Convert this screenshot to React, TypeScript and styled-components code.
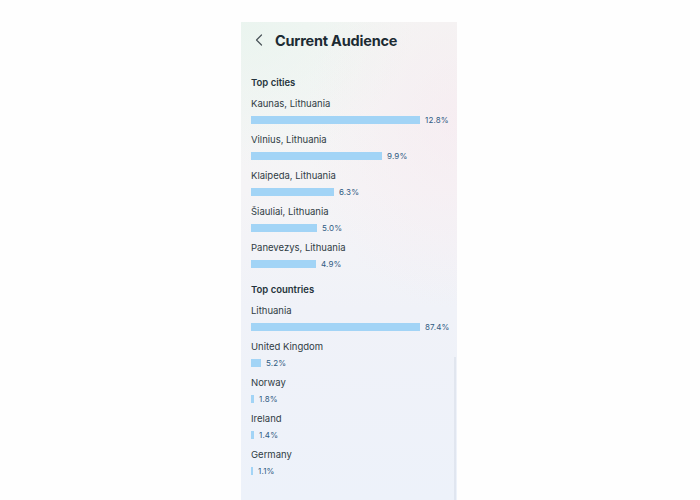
import React from "react";
import styled, { createGlobalStyle } from "styled-components";

const GlobalStyle = createGlobalStyle`
  html, body { margin: 0; padding: 0; background: #ffffff; }
  body { font-family: Inter, "Open Sans", "Liberation Sans", sans-serif; }
  * { box-sizing: border-box; }
`;

const Page = styled.div`
  width: 700px;
  height: 500px;
  display: flex;
  justify-content: flex-start;
  padding-left: 241px;
  background: #fefefe;
  overflow: hidden;
`;

const Phone = styled.div`
  position: relative;
  width: 216px;
  margin-top: 22px;
  height: 478px;
  display: flex;
  flex-direction: column;
  background:
    radial-gradient(ellipse 70% 40% at 100% 20%, rgba(248, 230, 238, 0.5), rgba(248, 230, 238, 0) 100%),
    radial-gradient(ellipse 80% 30% at 0% 0%, rgba(232, 244, 238, 0.8), rgba(232, 244, 238, 0) 100%),
    linear-gradient(180deg, #f4f6f4 0%, #f5f4f6 35%, #f0f2f8 60%, #edf2fa 100%);

  &::after {
    content: "";
    position: absolute;
    right: 1px;
    top: 335px;
    bottom: 0;
    width: 2px;
    background: rgba(200, 208, 222, 0.35);
  }
`;

const Header = styled.div`
  height: 36px;
  display: flex;
  align-items: center;
  padding-left: 14px;
  gap: 12px;
`;

const BackIcon = styled.svg`
  width: 8px;
  height: 12px;
  flex: none;
`;

const Title = styled.h1`
  margin: 0;
  font-size: 14.5px;
  font-weight: 700;
  color: #1c2b33;
  letter-spacing: -0.2px;
`;

const Content = styled.div`
  padding-left: 10px;
  display: flex;
  flex-direction: column;
  margin-top: 18px;
`;

const SectionTitle = styled.h2<{ $gap?: number }>`
  margin: ${(p) => p.$gap ?? 0}px 0 7px 0;
  font-size: 9.5px;
  line-height: 14px;
  font-weight: 600;
  color: #26343c;
`;

const Row = styled.div`
  display: flex;
  flex-direction: column;
  gap: 4px;
  margin-bottom: 8px;
`;

const Label = styled.div`
  font-size: 9.5px;
  line-height: 14px;
  color: #2f3c44;
`;

const BarLine = styled.div`
  height: 10px;
  display: flex;
  align-items: center;
  gap: 5px;
`;

const Bar = styled.div`
  height: 8px;
  background: #a2d4f6;
  flex: none;
`;

const Pct = styled.span`
  font-size: 8px;
  line-height: 10px;
  color: #2f5a82;
  letter-spacing: 0.15px;
`;

type Item = { name: string; pct: number };

const cities: Item[] = [
  { name: "Kaunas, Lithuania", pct: 12.8 },
  { name: "Vilnius, Lithuania", pct: 9.9 },
  { name: "Klaipeda, Lithuania", pct: 6.3 },
  { name: "Šiauliai, Lithuania", pct: 5.0 },
  { name: "Panevezys, Lithuania", pct: 4.9 },
];

const countries: Item[] = [
  { name: "Lithuania", pct: 87.4 },
  { name: "United Kingdom", pct: 5.2 },
  { name: "Norway", pct: 1.8 },
  { name: "Ireland", pct: 1.4 },
  { name: "Germany", pct: 1.1 },
];

const MAX_BAR = 169;

const List: React.FC<{ items: Item[] }> = ({ items }) => {
  const max = Math.max(...items.map((i) => i.pct));
  return (
    <>
      {items.map((it) => (
        <Row key={it.name}>
          <Label>{it.name}</Label>
          <BarLine>
            <Bar style={{ width: `${Math.max(2, Math.round((it.pct / max) * MAX_BAR))}px` }} />
            <Pct>{it.pct.toFixed(1)}%</Pct>
          </BarLine>
        </Row>
      ))}
    </>
  );
};

export default function App() {
  return (
    <>
      <GlobalStyle />
      <Page>
        <Phone>
          <Header>
            <BackIcon viewBox="0 0 8 12">
              <path d="M6.5 1 L1.5 6 L6.5 11" fill="none" stroke="#4a5358" strokeWidth="1.2" strokeLinecap="round" strokeLinejoin="round" />
            </BackIcon>
            <Title>Current Audience</Title>
          </Header>
          <Content>
            <SectionTitle>Top cities</SectionTitle>
            <List items={cities} />
            <SectionTitle $gap={6}>Top countries</SectionTitle>
            <List items={countries} />
          </Content>
        </Phone>
      </Page>
    </>
  );
}
